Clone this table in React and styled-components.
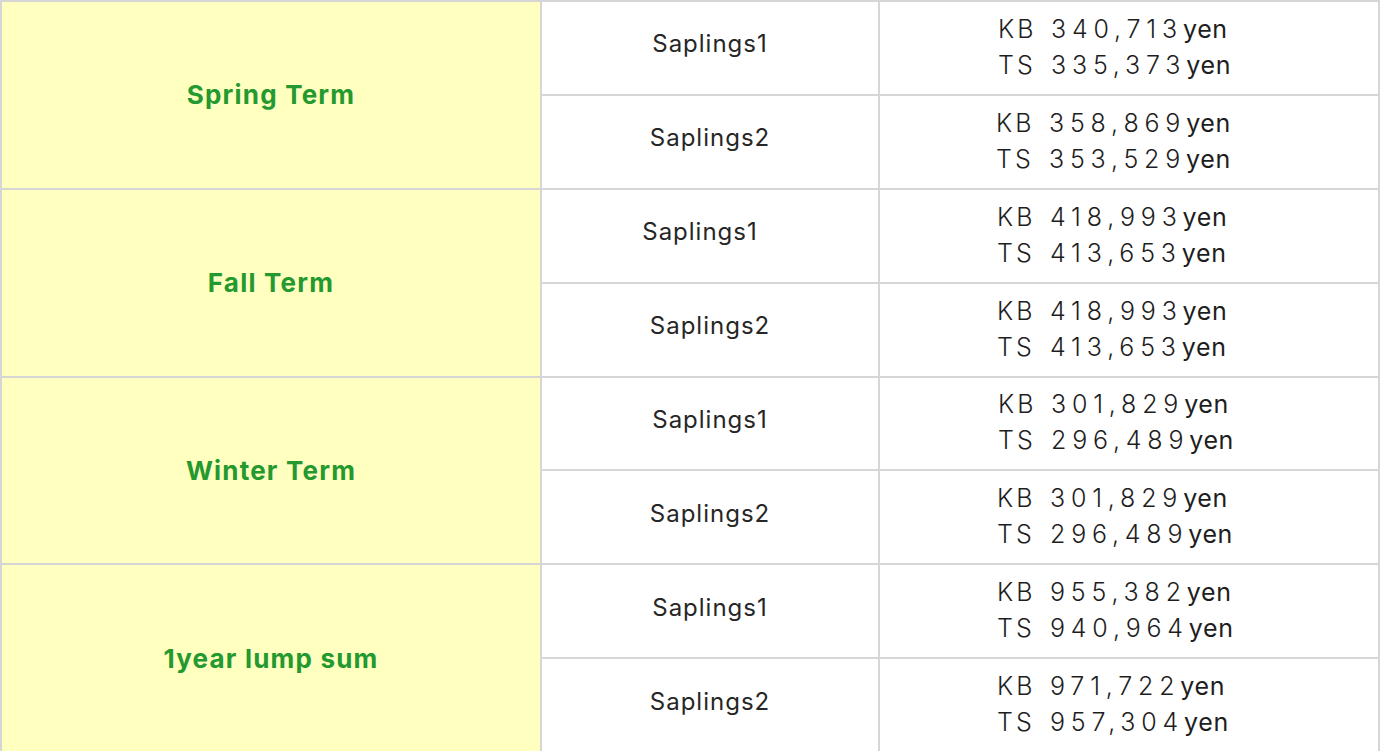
import React from "react";
import styled, { createGlobalStyle } from "styled-components";

const GlobalStyle = createGlobalStyle`
  html, body {
    margin: 0;
    padding: 0;
    background: #ffffff;
  }
`;

const Table = styled.table`
  width: 1380px;
  height: 751px;
  border-collapse: collapse;
  table-layout: fixed;
  font-family: Inter, "Noto Sans", "Liberation Sans", sans-serif;
`;

const Row = styled.tr`
  height: 93.875px;
`;

const TermCol = styled.col`
  width: 540px;
`;

const CourseCol = styled.col`
  width: 338px;
`;

const TermCell = styled.td`
  background: #ffffc0;
  border: 2px solid #d6d6d6;
  text-align: center;
  vertical-align: middle;
  color: #23992f;
  font-size: 26px;
  font-weight: 700;
  letter-spacing: 1.2px;
  padding: 0;
`;

const CourseCell = styled.td`
  border: 2px solid #d6d6d6;
  text-align: center;
  vertical-align: middle;
  color: #262626;
  font-size: 24px;
  font-weight: 400;
  letter-spacing: 1px;
  padding: 0 ${(p) => (p.$shift ? "20px" : "0")} 8px 0;
`;

const FeeCell = styled.td`
  border: 2px solid #d6d6d6;
  vertical-align: middle;
  padding: 0 0 2px ${(p) => p.$indent}px;
`;

const FeeLine = styled.div`
  display: flex;
  align-items: baseline;
  height: 36px;
  line-height: 36px;
  color: #1e1e1e;
`;

const Label = styled.span`
  width: 53px;
  font-size: 25px;
  font-weight: 300;
  letter-spacing: 3px;
`;

const Amount = styled.span`
  font-size: 25px;
  font-weight: 300;
  letter-spacing: 5.8px;
`;

const Yen = styled.span`
  font-size: 25px;
  font-weight: 400;
  letter-spacing: 0.6px;
`;

const terms = [
  {
    name: "Spring Term",
    rows: [
      { course: "Saplings1", kb: "340,713", ts: "335,373", indent: 118 },
      { course: "Saplings2", kb: "358,869", ts: "353,529", indent: 116 },
    ],
  },
  {
    name: "Fall Term",
    rows: [
      { course: "Saplings1", kb: "418,993", ts: "413,653", indent: 117, shift: true },
      { course: "Saplings2", kb: "418,993", ts: "413,653", indent: 117 },
    ],
  },
  {
    name: "Winter Term",
    rows: [
      { course: "Saplings1", kb: "301,829", ts: "296,489", indent: 118 },
      { course: "Saplings2", kb: "301,829", ts: "296,489", indent: 117 },
    ],
  },
  {
    name: "1year lump sum",
    rows: [
      { course: "Saplings1", kb: "955,382", ts: "940,964", indent: 117 },
      { course: "Saplings2", kb: "971,722", ts: "957,304", indent: 117 },
    ],
  },
];

function Fee({ kb, ts, indent }) {
  return (
    <FeeCell $indent={indent}>
      <FeeLine>
        <Label>KB</Label>
        <Amount>{kb}</Amount>
        <Yen>yen</Yen>
      </FeeLine>
      <FeeLine>
        <Label>TS</Label>
        <Amount>{ts}</Amount>
        <Yen>yen</Yen>
      </FeeLine>
    </FeeCell>
  );
}

export default function App() {
  return (
    <>
      <GlobalStyle />
      <Table>
        <colgroup>
          <TermCol />
          <CourseCol />
          <col />
        </colgroup>
        <tbody>
          {terms.map((term) =>
            term.rows.map((r, i) => (
              <Row key={term.name + i}>
                {i === 0 && <TermCell rowSpan={2}>{term.name}</TermCell>}
                <CourseCell $shift={r.shift}>{r.course}</CourseCell>
                <Fee kb={r.kb} ts={r.ts} indent={r.indent} />
              </Row>
            ))
          )}
        </tbody>
      </Table>
    </>
  );
}
